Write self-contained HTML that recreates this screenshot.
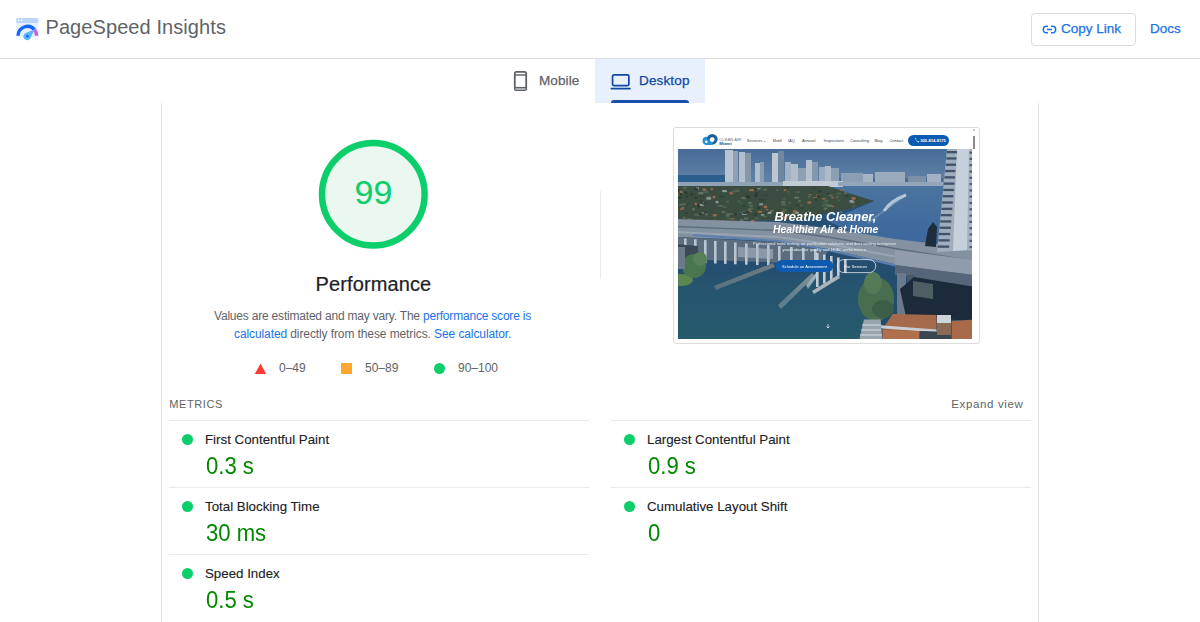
<!DOCTYPE html>
<html><head><meta charset="utf-8">
<style>
*{margin:0;padding:0;box-sizing:border-box}
html,body{width:1200px;height:622px;overflow:hidden;background:#fff;font-family:"Liberation Sans",sans-serif}
.a{position:absolute;white-space:nowrap}
.hdr{position:absolute;left:0;top:0;width:1200px;height:59px;border-bottom:1px solid #dadce0;background:#fff}
.title{left:45.5px;top:17.3px;font-size:20px;line-height:20px;letter-spacing:0.08px;color:#5f6368}
.btn{left:1031px;top:13px;width:105px;height:33px;border:1px solid #dadce0;border-radius:4px;background:#fff}
.blue{color:#1a73e8}
.med{-webkit-text-stroke:0.25px currentColor}
.tabbg{left:595px;top:59px;width:110px;height:44px;background:#e8f0fe}
.uline{left:611px;top:100px;width:78px;height:3px;background:#1a4fae;border-radius:3px 3px 0 0}
.panel{left:161px;top:103px;width:878px;height:600px;border-left:1px solid #e5e7ea;border-right:1px solid #e5e7ea}
.vdiv{left:600px;top:191px;width:1px;height:88px;background:#e8eaed}
.desc{font-size:12px;line-height:12px;color:#5f6368}
.leg{font-size:12px;line-height:12px;color:#5f6368}
.mt{font-size:13.3px;line-height:14px;color:#202124;-webkit-text-stroke:0.12px #202124;margin-top:0.5px}
.mv{font-size:23.5px;line-height:23.5px;color:#008800;transform:scaleX(0.94);transform-origin:0 0;margin-left:0.6px}
.hr{height:1px;background:#e8eaed}
.dot{width:11px;height:11px;border-radius:50%;background:#0cce6b}
</style></head><body>
<div class="hdr"></div>
<!-- logo -->
<svg class="a" style="left:15px;top:17px" width="25" height="25" viewBox="15 17 25 25">
  <rect x="16.3" y="18.1" width="22" height="19.5" rx="1.2" fill="#e8f0fe"/>
  <rect x="16.3" y="18.1" width="22" height="5" rx="1.2" fill="#bcd6fb"/>
  <circle cx="18.7" cy="20.4" r="0.8" fill="#fff"/>
  <circle cx="21.6" cy="20.4" r="0.8" fill="#fff"/>
  <path d="M18.05 35.8 A9.35 9.35 0 0 1 34.56 29.79" fill="none" stroke="#1464ff" stroke-width="3.4"/>
  <path d="M34.56 29.79 A9.35 9.35 0 0 1 36.75 35.8" fill="none" stroke="#c65cf2" stroke-width="3.4"/>
  <path d="M24.2 38.8 A3.7 3.7 0 0 1 25.3 33.2 L34.6 29.3 L30.3 38.5 A3.7 3.7 0 0 1 24.2 38.8Z" fill="#5cb6ff"/>
  <circle cx="27.4" cy="36.2" r="1.35" fill="#1464ff"/>
</svg>
<div class="a title">PageSpeed Insights</div>
<div class="a btn"></div>
<svg class="a" style="left:1042px;top:25px" width="15" height="9" viewBox="0 0 15 9">
  <path d="M6 1.2 H4.6 A3.3 3.3 0 0 0 4.6 7.8 H6 M9 1.2 H10.4 A3.3 3.3 0 0 1 10.4 7.8 H9 M4.9 4.5 H10.1" fill="none" stroke="#1a73e8" stroke-width="1.5"/>
</svg>
<div class="a blue med" style="left:1061px;top:22px;font-size:13.5px;line-height:14px">Copy Link</div>
<div class="a blue med" style="left:1150px;top:22px;font-size:13.5px;line-height:14px">Docs</div>

<!-- tabs -->
<div class="a tabbg"></div>
<div class="a uline"></div>
<svg class="a" style="left:513px;top:70px" width="15" height="22" viewBox="0 0 15 22">
  <rect x="1.8" y="1.8" width="11.4" height="18.4" rx="1.6" fill="none" stroke="#5f6368" stroke-width="1.8"/>
  <rect x="2.5" y="18" width="10" height="1.6" fill="#c9cacc"/>
  <rect x="1.8" y="16.9" width="11.4" height="1.4" fill="#5f6368"/>
  <rect x="1.8" y="4.3" width="11.4" height="1.4" fill="#5f6368"/>
</svg>
<div class="a med" style="left:539px;top:74.2px;font-size:13.5px;line-height:14px;letter-spacing:0.12px;color:#5f6368">Mobile</div>
<svg class="a" style="left:609px;top:73px" width="23" height="18" viewBox="0 0 23 18">
  <rect x="3.55" y="1.95" width="16.3" height="10.6" rx="1.3" fill="none" stroke="#0f47a3" stroke-width="1.7"/>
  <rect x="1.5" y="14.8" width="20.3" height="1.6" rx="0.8" fill="#0f47a3"/>
</svg>
<div class="a med" style="left:639px;top:74.2px;font-size:13.5px;line-height:14px;letter-spacing:0.15px;color:#0f47a3">Desktop</div>

<!-- panel -->
<div class="a panel"></div>

<!-- gauge -->
<svg class="a" style="left:318px;top:139px" width="111" height="111" viewBox="0 0 111 111">
  <circle cx="55.3" cy="55.3" r="51.3" fill="#eaf8ef" stroke="#0cce6b" stroke-width="6.5"/>
</svg>
<div class="a" style="left:323.5px;width:100px;text-align:center;top:174.5px;font-size:34px;line-height:34px;color:#0cce6b">99</div>
<div class="a" style="left:315.6px;top:274px;font-size:20px;line-height:20px;letter-spacing:0.11px;color:#202124;-webkit-text-stroke:0.2px #202124">Performance</div>
<div class="a desc" style="left:214px;top:310.2px;letter-spacing:-0.2px">Values are estimated and may vary. The <span class="blue">performance score is</span></div>
<div class="a desc" style="left:234px;top:328px;letter-spacing:-0.1px"><span class="blue">calculated</span> directly from these metrics. <span class="blue">See calculator.</span></div>

<svg class="a" style="left:254px;top:363px" width="13" height="12" viewBox="0 0 13 12"><path d="M6.5 0.5 L12.2 11 H0.8Z" fill="#ff3b36"/></svg>
<div class="a leg" style="left:279px;top:362px">0–49</div>
<div class="a" style="left:341px;top:363.3px;width:11px;height:10.5px;background:#ffa630"></div>
<div class="a leg" style="left:365px;top:362px">50–89</div>
<div class="a dot" style="left:434px;top:362.8px"></div>
<div class="a leg" style="left:458px;top:362px">90–100</div>

<div class="a vdiv"></div>

<!-- screenshot -->
<div class="a" style="left:673px;top:127px;width:307px;height:217px;border:1px solid #dcdcdc;border-radius:3px;background:#fff"></div>
<svg class="a" style="left:674px;top:128px" width="305" height="21" viewBox="674 128 305 21">
  <circle cx="706.5" cy="140.8" r="4" fill="#2a8fd0"/>
  <circle cx="712.2" cy="139.3" r="5.4" fill="#1f5f9a"/>
  <rect x="704" y="139.5" width="9" height="5.4" rx="2.7" fill="#2a8fd0"/>
  <circle cx="712.2" cy="139.6" r="2.4" fill="#fff"/>
  <circle cx="706.3" cy="141.8" r="1.2" fill="#fff"/>
  <text x="719.3" y="140.6" font-family="Liberation Sans" font-size="4.2" fill="#5d7a95">CLEAN AIR</text>
  <text x="719.3" y="145.2" font-family="Liberation Sans" font-weight="bold" font-size="4.4" fill="#1f4f80">Miami</text>
  <g font-family="Liberation Sans" font-size="4" fill="#3c4650">
    <text x="746.8" y="142">Services ⌄</text>
    <text x="772.8" y="142">Mold</text>
    <text x="788" y="142">IAQ</text>
    <text x="801.9" y="142">Aerosol</text>
    <text x="823.7" y="142">Inspections</text>
    <text x="850" y="142">Consulting</text>
    <text x="874.4" y="142">Blog</text>
    <text x="889.4" y="142">Contact</text>
  </g>
  <rect x="908" y="134.9" width="41" height="11.2" rx="5.6" fill="#0b5cb0"/>
  <path d="M915.2 138.3 q0.3 2.8 3.2 4.3 l0.9 -0.9 -1.1 -0.8 -0.7 0.6 q-1.2 -0.7 -1.7 -1.9 l0.6 -0.6 -0.8 -1.2z" fill="#fff"/>
  <text x="920.3" y="142.1" font-family="Liberation Sans" font-weight="bold" font-size="4.1" fill="#fff">305-814-8175</text>
  <rect x="973" y="129.5" width="2" height="1" fill="#9a9a9a"/>
  <rect x="973" y="136" width="2" height="23" fill="#8a8a8a"/>
</svg>
<svg class="a" style="left:678px;top:149px" width="294" height="190" viewBox="0 0 294 190">
<defs>
<linearGradient id="sky" x1="0" y1="0" x2="0" y2="1"><stop offset="0" stop-color="#456a95"/><stop offset="1" stop-color="#6384a9"/></linearGradient>
<linearGradient id="wat" x1="0" y1="0" x2="0" y2="1"><stop offset="0" stop-color="#2b5a86"/><stop offset="0.45" stop-color="#264f74"/><stop offset="1" stop-color="#214d64"/></linearGradient>
<linearGradient id="bay" x1="0" y1="0" x2="0" y2="1"><stop offset="0" stop-color="#4b74a0"/><stop offset="1" stop-color="#37649a"/></linearGradient>
<linearGradient id="lw" x1="0" y1="0" x2="0" y2="1"><stop offset="0" stop-color="#2a6074" stop-opacity="0"/><stop offset="0.4" stop-color="#2a6074" stop-opacity="0.45"/><stop offset="1" stop-color="#2d6570" stop-opacity="0.6"/></linearGradient>
<filter id="bl" x="-5%" y="-5%" width="110%" height="110%"><feGaussianBlur stdDeviation="0.7"/></filter>
<filter id="bl2"><feGaussianBlur stdDeviation="0.25"/></filter>
<clipPath id="cp"><rect width="294" height="190"/></clipPath>
</defs>
<g clip-path="url(#cp)"><g filter="url(#bl)">
<rect x="-3" y="-3" width="300" height="196" fill="url(#wat)"/>
<rect x="-3" y="-3" width="300" height="39" fill="url(#sky)"/>
<rect x="-3" y="26" width="60" height="11" fill="#2a5f8e"/>
<rect x="150" y="29" width="115" height="7" fill="#4a6d94"/>
<polygon points="130,36 268,35 268,112 200,96 150,72 196,52 170,44" fill="url(#bay)"/>
<path d="M190 74 Q205 62 228 46" stroke="#7d9cc0" stroke-width="2" fill="none" opacity="0.6"/>
<path d="M206 62 Q212 52 228 46" stroke="#c3d2e2" stroke-width="3" fill="none" opacity="0.85"/>
<rect x="47" y="1" width="8" height="35" fill="#b7c3d0"/>
<rect x="55" y="2" width="5" height="34" fill="#8fa0b3"/>
<rect x="61" y="3" width="6" height="33" fill="#b3bfcd"/>
<rect x="67" y="4" width="6" height="32" fill="#8597ab"/>
<rect x="77" y="14" width="5" height="22" fill="#b2becc"/>
<rect x="82" y="13" width="4" height="23" fill="#8a9cb0"/>
<rect x="94" y="4" width="6" height="32" fill="#bcc7d3"/>
<rect x="100" y="2" width="6" height="34" fill="#71869f"/>
<rect x="107" y="13" width="6" height="23" fill="#a3b2c4"/>
<rect x="113" y="15" width="7" height="21" fill="#b0bdcb"/>
<rect x="120" y="19" width="8" height="17" fill="#8ea0b4"/>
<rect x="128" y="11" width="6" height="25" fill="#b5c1ce"/>
<rect x="134" y="13" width="6" height="23" fill="#8497ad"/>
<rect x="141" y="18" width="6" height="18" fill="#9cacbf"/>
<rect x="147" y="17" width="6" height="19" fill="#aebbca"/>
<rect x="153" y="19" width="8" height="17" fill="#8c9eb2"/>
<rect x="163" y="24" width="22" height="12" fill="#8c9eb3"/>
<rect x="185" y="25" width="10" height="11" fill="#a5b4c5"/>
<rect x="197" y="23" width="30" height="13" fill="#9aabbe"/>
<rect x="230" y="27" width="18" height="9" fill="#7d90a6"/>
<rect x="249" y="25" width="14" height="11" fill="#a2b2c4"/>
<rect x="-3" y="33" width="115" height="4" fill="#8fa3b6"/>
<rect x="105" y="32" width="60" height="6" fill="#c2ccd6"/>
<rect x="160" y="33" width="105" height="4" fill="#93a5b8"/>
<polygon points="-3,37 150,37 170,44 196,52 172,60 148,64 120,71 -3,73" fill="#3a4e40"/>
<rect x="85.8" y="56.6" width="3.4" height="2.4" fill="#98694e"/>
<rect x="34.8" y="65.1" width="3.9" height="2.3" fill="#98694e"/>
<rect x="16.3" y="47.6" width="3.6" height="2.4" fill="#2e4034"/>
<rect x="121.1" y="57.8" width="4.9" height="2.1" fill="#34473a"/>
<rect x="117.4" y="42.5" width="4.5" height="1.3" fill="#566a58"/>
<rect x="4.9" y="67.8" width="2.1" height="1.8" fill="#5c6f5a"/>
<rect x="83.5" y="66.5" width="2.7" height="1.6" fill="#46604c"/>
<rect x="-1.1" y="40.0" width="2.8" height="2.6" fill="#2a3a30"/>
<rect x="135.3" y="48.0" width="3.5" height="1.2" fill="#8a644e"/>
<rect x="107.2" y="40.8" width="4.5" height="1.7" fill="#2e4034"/>
<rect x="-1.9" y="44.3" width="3.4" height="2.6" fill="#566a58"/>
<rect x="75.1" y="39.6" width="2.6" height="2.1" fill="#2a3a30"/>
<rect x="63.4" y="47.9" width="4.9" height="2.3" fill="#566a58"/>
<rect x="20.9" y="45.6" width="2.0" height="1.9" fill="#2e4034"/>
<rect x="92.4" y="60.9" width="3.3" height="1.5" fill="#8a644e"/>
<rect x="140.0" y="41.6" width="3.2" height="1.8" fill="#2a3a30"/>
<rect x="1.8" y="43.6" width="3.9" height="1.3" fill="#5c6f5a"/>
<rect x="48.1" y="64.0" width="4.5" height="1.7" fill="#4f6352"/>
<rect x="12.4" y="44.3" width="2.7" height="2.0" fill="#2a3a30"/>
<rect x="70.1" y="52.9" width="3.5" height="2.0" fill="#5c6f5a"/>
<rect x="166.1" y="43.4" width="2.9" height="1.5" fill="#62725f"/>
<rect x="116.4" y="62.4" width="4.2" height="2.5" fill="#62725f"/>
<rect x="36.1" y="70.3" width="3.8" height="1.8" fill="#98694e"/>
<rect x="18.1" y="38.4" width="2.7" height="2.2" fill="#8d9a9c"/>
<rect x="47.9" y="65.8" width="3.5" height="1.9" fill="#5c6f5a"/>
<rect x="22.5" y="53.8" width="4.6" height="2.1" fill="#2a3a30"/>
<rect x="52.4" y="69.1" width="4.2" height="1.3" fill="#8a644e"/>
<rect x="77.8" y="45.7" width="2.5" height="1.7" fill="#566a58"/>
<rect x="109.0" y="41.6" width="2.4" height="1.8" fill="#4f6352"/>
<rect x="62.2" y="62.7" width="3.8" height="1.4" fill="#46604c"/>
<rect x="4.8" y="37.6" width="4.1" height="2.5" fill="#4f6352"/>
<rect x="2.1" y="59.3" width="2.2" height="1.6" fill="#98694e"/>
<rect x="24.5" y="39.5" width="3.6" height="2.2" fill="#98694e"/>
<rect x="175.5" y="49.3" width="3.4" height="1.3" fill="#2a3a30"/>
<rect x="3.9" y="54.5" width="3.9" height="1.7" fill="#566a58"/>
<rect x="111.0" y="58.3" width="2.3" height="1.4" fill="#2e4034"/>
<rect x="47.9" y="51.6" width="3.2" height="2.2" fill="#4f6352"/>
<rect x="110.7" y="52.4" width="2.3" height="2.3" fill="#46604c"/>
<rect x="3.8" y="58.0" width="2.1" height="2.5" fill="#98694e"/>
<rect x="19.9" y="64.3" width="4.8" height="1.6" fill="#2a3a30"/>
<rect x="0.2" y="47.5" width="3.8" height="1.9" fill="#2a3a30"/>
<rect x="144.2" y="49.0" width="3.5" height="1.5" fill="#98694e"/>
<rect x="76.5" y="45.8" width="3.3" height="2.3" fill="#2a3a30"/>
<rect x="72.6" y="57.4" width="2.6" height="1.4" fill="#4f6352"/>
<rect x="66.0" y="68.3" width="4.1" height="2.5" fill="#566a58"/>
<rect x="51.7" y="42.9" width="3.4" height="2.5" fill="#98694e"/>
<rect x="159.2" y="50.4" width="3.5" height="1.6" fill="#46604c"/>
<rect x="85.8" y="39.6" width="2.8" height="2.1" fill="#566a58"/>
<rect x="129.6" y="46.8" width="2.9" height="2.3" fill="#4f6352"/>
<rect x="1.7" y="41.8" width="2.6" height="2.3" fill="#98694e"/>
<rect x="49.7" y="64.3" width="5.0" height="1.4" fill="#566a58"/>
<rect x="19.1" y="55.7" width="4.4" height="2.5" fill="#2a3a30"/>
<rect x="130.8" y="44.0" width="2.8" height="2.2" fill="#98694e"/>
<rect x="144.5" y="55.7" width="2.5" height="1.6" fill="#566a58"/>
<rect x="65.1" y="61.4" width="3.5" height="2.6" fill="#46604c"/>
<rect x="28.9" y="66.7" width="4.7" height="1.3" fill="#40553f"/>
<rect x="23.2" y="52.9" width="4.7" height="1.2" fill="#2a3a30"/>
<rect x="104.7" y="59.8" width="4.4" height="2.5" fill="#46604c"/>
<rect x="88.0" y="59.8" width="2.3" height="2.4" fill="#8a644e"/>
<rect x="22.0" y="45.5" width="4.9" height="2.6" fill="#34473a"/>
<rect x="102.2" y="64.7" width="2.8" height="2.2" fill="#4f6352"/>
<rect x="1.0" y="54.7" width="3.3" height="2.0" fill="#566a58"/>
<rect x="147.0" y="54.1" width="2.7" height="2.4" fill="#566a58"/>
<rect x="81.2" y="38.2" width="3.0" height="2.3" fill="#46604c"/>
<rect x="25.3" y="42.2" width="4.7" height="1.9" fill="#46604c"/>
<rect x="129.5" y="52.4" width="3.7" height="2.2" fill="#98694e"/>
<rect x="145.0" y="52.4" width="2.9" height="2.2" fill="#46604c"/>
<rect x="121.9" y="55.3" width="2.8" height="2.1" fill="#46604c"/>
<rect x="116.2" y="47.7" width="4.9" height="1.9" fill="#62725f"/>
<rect x="109.2" y="44.0" width="2.3" height="1.2" fill="#46604c"/>
<rect x="71.1" y="55.8" width="3.5" height="1.8" fill="#566a58"/>
<rect x="153.4" y="56.7" width="2.3" height="1.4" fill="#98694e"/>
<rect x="178.6" y="53.1" width="2.8" height="1.9" fill="#34473a"/>
<rect x="22.6" y="52.2" width="3.6" height="1.4" fill="#98694e"/>
<rect x="79.4" y="38.0" width="2.4" height="2.3" fill="#8d9a9c"/>
<rect x="2.4" y="43.8" width="2.0" height="1.6" fill="#8a644e"/>
<rect x="138.4" y="45.6" width="2.3" height="2.2" fill="#98694e"/>
<rect x="21.8" y="54.9" width="4.2" height="2.2" fill="#8d9a9c"/>
<rect x="117.5" y="55.8" width="3.6" height="1.5" fill="#2a3a30"/>
<rect x="39.9" y="56.0" width="4.6" height="1.5" fill="#5c6f5a"/>
<rect x="173.1" y="48.1" width="4.7" height="1.5" fill="#4f6352"/>
<rect x="149.0" y="43.8" width="2.4" height="1.5" fill="#2e4034"/>
<rect x="139.0" y="46.1" width="3.3" height="2.5" fill="#2e4034"/>
<rect x="103.4" y="61.7" width="3.2" height="2.2" fill="#8a644e"/>
<rect x="1.4" y="44.0" width="3.1" height="2.3" fill="#2a3a30"/>
<rect x="68.1" y="61.7" width="4.3" height="1.9" fill="#2a3a30"/>
<rect x="131.0" y="43.6" width="3.4" height="1.2" fill="#2e4034"/>
<rect x="145.8" y="58.5" width="3.4" height="1.5" fill="#5c6f5a"/>
<rect x="20.3" y="43.0" width="5.0" height="2.5" fill="#62725f"/>
<rect x="16.5" y="39.2" width="3.4" height="2.3" fill="#2a3a30"/>
<rect x="61.4" y="53.3" width="3.1" height="1.5" fill="#46604c"/>
<rect x="70.4" y="59.2" width="4.5" height="1.5" fill="#566a58"/>
<rect x="86.1" y="62.9" width="4.8" height="2.0" fill="#34473a"/>
<rect x="16.4" y="64.7" width="4.7" height="2.3" fill="#4f6352"/>
<rect x="120.1" y="51.2" width="2.6" height="2.0" fill="#5c6f5a"/>
<rect x="64.1" y="63.7" width="4.7" height="2.2" fill="#8d9a9c"/>
<rect x="76.7" y="68.4" width="4.1" height="2.3" fill="#46604c"/>
<rect x="146.5" y="51.2" width="2.6" height="2.3" fill="#40553f"/>
<rect x="56.5" y="40.5" width="5.0" height="2.5" fill="#4f6352"/>
<rect x="7.6" y="46.6" width="2.9" height="1.5" fill="#2a3a30"/>
<rect x="76.8" y="43.4" width="3.2" height="2.6" fill="#2e4034"/>
<rect x="122.6" y="61.5" width="4.9" height="1.2" fill="#34473a"/>
<rect x="117.4" y="62.9" width="3.3" height="1.9" fill="#8d9a9c"/>
<rect x="145.7" y="59.7" width="2.3" height="1.6" fill="#566a58"/>
<rect x="173.7" y="56.3" width="3.2" height="1.9" fill="#46604c"/>
<rect x="162.2" y="40.5" width="4.4" height="1.3" fill="#98694e"/>
<rect x="113.9" y="63.6" width="3.2" height="2.5" fill="#566a58"/>
<rect x="72.9" y="71.0" width="3.6" height="2.0" fill="#98694e"/>
<rect x="81.3" y="54.3" width="3.6" height="2.0" fill="#8d9a9c"/>
<rect x="68.9" y="47.0" width="2.8" height="2.5" fill="#2a3a30"/>
<rect x="126.7" y="63.2" width="2.0" height="1.5" fill="#566a58"/>
<rect x="6.3" y="42.5" width="3.2" height="2.5" fill="#2a3a30"/>
<rect x="143.2" y="38.8" width="4.8" height="1.3" fill="#40553f"/>
<rect x="173.7" y="52.0" width="2.8" height="2.3" fill="#98694e"/>
<rect x="6.8" y="40.4" width="4.7" height="1.4" fill="#40553f"/>
<rect x="135.0" y="38.8" width="3.4" height="1.5" fill="#34473a"/>
<rect x="8.1" y="55.5" width="3.1" height="1.4" fill="#2e4034"/>
<rect x="78.9" y="58.0" width="3.7" height="1.8" fill="#2a3a30"/>
<rect x="148.9" y="55.6" width="4.9" height="2.2" fill="#62725f"/>
<rect x="44.3" y="41.0" width="4.4" height="2.1" fill="#8d9a9c"/>
<rect x="67.7" y="46.5" width="4.2" height="2.2" fill="#2a3a30"/>
<rect x="34.9" y="46.8" width="2.6" height="1.5" fill="#8a644e"/>
<rect x="9.8" y="46.5" width="2.1" height="1.3" fill="#34473a"/>
<rect x="41.2" y="46.7" width="4.7" height="1.4" fill="#2e4034"/>
<rect x="43.5" y="71.4" width="3.4" height="1.5" fill="#98694e"/>
<rect x="64.7" y="63.1" width="4.4" height="1.8" fill="#2e4034"/>
<rect x="147.2" y="52.6" width="2.8" height="2.3" fill="#40553f"/>
<rect x="69.6" y="59.9" width="3.0" height="2.0" fill="#5c6f5a"/>
<rect x="81.0" y="49.9" width="3.4" height="1.7" fill="#2e4034"/>
<rect x="103.5" y="52.1" width="3.5" height="2.2" fill="#5c6f5a"/>
<rect x="56.0" y="64.1" width="2.9" height="2.5" fill="#2e4034"/>
<rect x="115.1" y="61.3" width="4.2" height="2.2" fill="#98694e"/>
<rect x="52.9" y="42.0" width="4.0" height="1.7" fill="#4f6352"/>
<rect x="173.8" y="48.3" width="3.7" height="2.5" fill="#98694e"/>
<rect x="83.0" y="65.1" width="3.4" height="1.5" fill="#8d9a9c"/>
<rect x="98.1" y="40.0" width="2.1" height="2.1" fill="#4f6352"/>
<rect x="111.5" y="64.9" width="3.7" height="2.3" fill="#40553f"/>
<rect x="102.9" y="66.3" width="2.5" height="1.3" fill="#5c6f5a"/>
<rect x="86.1" y="66.9" width="2.7" height="1.3" fill="#566a58"/>
<rect x="28.8" y="47.4" width="4.0" height="2.3" fill="#566a58"/>
<rect x="10.4" y="56.1" width="2.3" height="1.3" fill="#46604c"/>
<rect x="14.4" y="59.2" width="2.3" height="2.3" fill="#62725f"/>
<rect x="79.9" y="61.9" width="4.3" height="1.9" fill="#98694e"/>
<rect x="146.4" y="50.8" width="4.4" height="1.7" fill="#4f6352"/>
<rect x="24.5" y="54.1" width="2.2" height="2.1" fill="#40553f"/>
<rect x="7.0" y="63.5" width="3.0" height="1.2" fill="#2a3a30"/>
<rect x="71.3" y="40.1" width="4.9" height="2.1" fill="#98694e"/>
<rect x="99.6" y="61.9" width="3.3" height="1.8" fill="#2e4034"/>
<rect x="26.4" y="62.9" width="3.1" height="1.4" fill="#2a3a30"/>
<rect x="37.6" y="51.9" width="2.8" height="2.4" fill="#8d9a9c"/>
<rect x="89.5" y="62.6" width="3.9" height="2.3" fill="#8d9a9c"/>
<rect x="32.8" y="39.2" width="2.1" height="1.9" fill="#98694e"/>
<rect x="153.3" y="47.9" width="2.6" height="1.5" fill="#8a644e"/>
<rect x="43.7" y="62.1" width="3.5" height="1.8" fill="#5c6f5a"/>
<rect x="171.5" y="51.1" width="3.9" height="2.5" fill="#8d9a9c"/>
<rect x="104.8" y="66.9" width="4.7" height="2.5" fill="#98694e"/>
<rect x="64.4" y="56.2" width="3.4" height="1.5" fill="#2e4034"/>
<rect x="7.6" y="70.2" width="4.9" height="2.3" fill="#34473a"/>
<rect x="9.2" y="69.3" width="4.6" height="2.5" fill="#566a58"/>
<rect x="85.3" y="45.6" width="3.8" height="1.4" fill="#34473a"/>
<rect x="28.4" y="48.3" width="4.7" height="2.3" fill="#8d9a9c"/>
<rect x="23.4" y="63.0" width="2.8" height="1.9" fill="#5c6f5a"/>
<rect x="27.2" y="64.0" width="2.6" height="2.5" fill="#566a58"/>
<rect x="26.9" y="41.5" width="2.8" height="2.2" fill="#4f6352"/>
<rect x="16.9" y="53.8" width="2.2" height="2.2" fill="#98694e"/>
<rect x="103.4" y="54.7" width="4.4" height="1.8" fill="#566a58"/>
<rect x="158.3" y="44.3" width="3.2" height="1.9" fill="#46604c"/>
<rect x="59.3" y="51.2" width="2.9" height="1.9" fill="#46604c"/>
<rect x="136.7" y="49.6" width="2.4" height="2.1" fill="#2a3a30"/>
<rect x="129.1" y="63.1" width="4.0" height="1.2" fill="#2e4034"/>
<rect x="71.2" y="61.9" width="2.9" height="1.4" fill="#8a644e"/>
<rect x="161.8" y="62.2" width="2.5" height="2.1" fill="#5c6f5a"/>
<rect x="105.8" y="40.0" width="2.6" height="2.2" fill="#8a644e"/>
<rect x="61.9" y="70.1" width="3.4" height="2.1" fill="#5c6f5a"/>
<rect x="84.7" y="50.4" width="2.4" height="1.3" fill="#2e4034"/>
<rect x="129.5" y="61.8" width="2.6" height="1.3" fill="#62725f"/>
<rect x="87.9" y="61.6" width="2.7" height="1.4" fill="#2e4034"/>
<rect x="22.1" y="51.2" width="3.0" height="2.4" fill="#2e4034"/>
<rect x="37.9" y="42.2" width="3.2" height="1.7" fill="#40553f"/>
<rect x="78.0" y="37.5" width="3.8" height="1.6" fill="#34473a"/>
<rect x="151.0" y="45.6" width="3.6" height="1.6" fill="#5c6f5a"/>
<rect x="34.6" y="47.7" width="2.3" height="1.7" fill="#98694e"/>
<rect x="96.8" y="64.6" width="3.8" height="1.4" fill="#2e4034"/>
<rect x="104.4" y="49.3" width="3.5" height="2.0" fill="#46604c"/>
<rect x="36.4" y="69.7" width="4.1" height="2.5" fill="#40553f"/>
<rect x="108.1" y="37.9" width="2.6" height="1.3" fill="#2a3a30"/>
<rect x="45.5" y="57.2" width="3.0" height="1.3" fill="#40553f"/>
<rect x="167.3" y="46.3" width="3.4" height="2.2" fill="#2e4034"/>
<rect x="44.3" y="56.9" width="3.7" height="2.0" fill="#46604c"/>
<rect x="49.3" y="68.8" width="3.8" height="1.4" fill="#4f6352"/>
<rect x="158.0" y="47.1" width="2.7" height="2.0" fill="#4f6352"/>
<rect x="159.2" y="43.5" width="4.4" height="1.8" fill="#46604c"/>
<rect x="76.3" y="64.4" width="2.4" height="2.3" fill="#2a3a30"/>
<polygon points="-3,70 100,73 150,79 217,90 294,99 297,99 297,130 220,116 150,100 100,92 -3,88" fill="#8391a1"/>
<path d="M-3 77.5 L100 81.5 L150 88 L220 100 L297 112" stroke="#5d6d7f" stroke-width="1.3" fill="none"/>
<path d="M-3 83 L100 88 L150 95 L220 108 L297 121" stroke="#97a4b2" stroke-width="2" fill="none"/>
<path d="M15 86 L100 92 L150 101 L220 117 L297 131" stroke="#5a7fb0" stroke-width="2" fill="none"/>
<polygon points="-3,88 100,93 150,102 140,118 90,113 -3,110" fill="#5b6d80"/>
<rect x="6" y="89.5" width="2.6" height="23.8" fill="#b9c5d1"/>
<rect x="16" y="90.3" width="2.6" height="23.4" fill="#b9c5d1"/>
<rect x="26" y="91.1" width="2.6" height="23.0" fill="#b9c5d1"/>
<rect x="36" y="91.9" width="2.6" height="22.6" fill="#b9c5d1"/>
<rect x="46" y="92.7" width="2.6" height="22.2" fill="#b9c5d1"/>
<rect x="56" y="93.5" width="2.6" height="21.8" fill="#b9c5d1"/>
<rect x="67" y="94.4" width="2.6" height="21.3" fill="#b9c5d1"/>
<rect x="78" y="95.2" width="2.6" height="20.9" fill="#b9c5d1"/>
<rect x="89" y="96.1" width="2.6" height="20.4" fill="#b9c5d1"/>
<rect x="100" y="97.0" width="2.6" height="20.0" fill="#b9c5d1"/>
<rect x="112" y="98.0" width="2.6" height="19.5" fill="#b9c5d1"/>
<rect x="124" y="98.9" width="2.6" height="19.0" fill="#b9c5d1"/>
<rect x="136" y="99.9" width="2.6" height="18.6" fill="#b9c5d1"/>
<polygon points="60,98 95,100 95,110 60,108" fill="#aab6c2" opacity="0.6"/>
<polygon points="-3,95 20,97 20,110 -3,110" fill="#3b4856"/>
<polygon points="217,101 297,111 297,126 217,116" fill="#909cab"/>
<polygon points="217,116 297,126 297,138 217,126" fill="#56657a"/>
<rect x="219" y="124" width="9" height="46" fill="#6a798b"/>
<rect x="229" y="126" width="7" height="40" fill="#4a5868"/>
<polygon points="36,137 95,114 97,118 38,141" fill="#6c7a82"/>
<polygon points="100,156 134,124 137,127 103,160" fill="#8e989e"/>
<polygon points="128,136 138,124 140,126 130,140" fill="#b7c0c8"/>
<rect x="-3" y="118" width="205" height="75" fill="url(#lw)"/>
<rect x="138" y="104.0" width="2.6" height="34" fill="#c3ccd6"/>
<rect x="145" y="105.5" width="2.6" height="29" fill="#c3ccd6"/>
<rect x="152" y="107.0" width="2.6" height="24" fill="#c3ccd6"/>
<rect x="159" y="108.5" width="2.6" height="19" fill="#c3ccd6"/>
<rect x="166" y="110.0" width="2.6" height="14" fill="#c3ccd6"/>
<polygon points="134,142 160,126 162,129 136,145" fill="#aab4be"/>
<ellipse cx="4" cy="131" rx="11" ry="6" fill="#5a8650"/>
<ellipse cx="16" cy="117" rx="12" ry="12" fill="#4a7450"/>
<ellipse cx="22" cy="110" rx="7" ry="7" fill="#5a805a"/>
<rect x="-3" y="98" width="10" height="22" fill="#6a7a88"/>
<polygon points="236,128 297,138 297,172 228,168 222,140" fill="#1d2b3b"/>
<polygon points="235,132 255,135 255,150 235,147" fill="#4d5e64"/>
<ellipse cx="198" cy="150" rx="18" ry="22" fill="#4a6e50"/>
<ellipse cx="195" cy="134" rx="9" ry="11" fill="#557a58"/>
<ellipse cx="205" cy="160" rx="11" ry="9" fill="#3d5f46"/>
<polygon points="214.6,165 258.5,166 258.5,183 204.4,180.5" fill="#a5694b"/>
<polygon points="202.7,176.3 258.5,180.5 258.5,183.5 202.7,179.3" fill="#c9cfd4"/>
<polygon points="204.4,180.5 241.6,182 241.6,193 204.4,193" fill="#b0704e"/>
<polygon points="241.6,182 275,183 275,193 241.6,193" fill="#3a4450"/>
<polygon points="273.7,172 297,170.4 297,193 273.7,193" fill="#a86a4a"/>
<rect x="259" y="166" width="14" height="8" fill="#cdd4da"/>
<rect x="259" y="174" width="14" height="12" fill="#8a6a55"/>
<polygon points="186,170.4 202.7,170.4 204.4,193 180.8,193" fill="#9aa5b0"/>
<path d="M184 176 L203 176 M183 181 L203 181 M182 186 L204 186" stroke="#dfe4e8" stroke-width="0.9"/>
<polygon points="269,0 297,0 297,101 259,103" fill="#9fadbd"/>
<polygon points="279,0 291,0 289,101 275,102" fill="#c6d0da"/>
<rect x="291" y="0" width="6" height="101" fill="#a9b6c4"/>
<rect x="269.0" y="2.0" width="10.0" height="2.3" fill="#3f5168"/>
<rect x="291.5" y="2.5" width="3.5" height="2.2" fill="#4a5b70"/>
<rect x="268.4" y="8.3" width="10.1" height="2.3" fill="#3f5168"/>
<rect x="291.5" y="8.8" width="3.5" height="2.2" fill="#4a5b70"/>
<rect x="267.8" y="14.6" width="10.2" height="2.3" fill="#3f5168"/>
<rect x="291.5" y="15.1" width="3.5" height="2.2" fill="#4a5b70"/>
<rect x="267.1" y="20.9" width="10.3" height="2.3" fill="#3f5168"/>
<rect x="291.5" y="21.4" width="3.5" height="2.2" fill="#4a5b70"/>
<rect x="266.5" y="27.2" width="10.4" height="2.3" fill="#3f5168"/>
<rect x="291.5" y="27.7" width="3.5" height="2.2" fill="#4a5b70"/>
<rect x="265.9" y="33.5" width="10.5" height="2.3" fill="#3f5168"/>
<rect x="291.5" y="34.0" width="3.5" height="2.2" fill="#4a5b70"/>
<rect x="265.3" y="39.8" width="10.6" height="2.3" fill="#3f5168"/>
<rect x="291.5" y="40.3" width="3.5" height="2.2" fill="#4a5b70"/>
<rect x="264.7" y="46.1" width="10.7" height="2.3" fill="#3f5168"/>
<rect x="291.5" y="46.6" width="3.5" height="2.2" fill="#4a5b70"/>
<rect x="264.0" y="52.4" width="10.8" height="2.3" fill="#3f5168"/>
<rect x="291.5" y="52.9" width="3.5" height="2.2" fill="#4a5b70"/>
<rect x="263.4" y="58.7" width="10.9" height="2.3" fill="#3f5168"/>
<rect x="291.5" y="59.2" width="3.5" height="2.2" fill="#4a5b70"/>
<rect x="262.8" y="65.0" width="11.0" height="2.3" fill="#3f5168"/>
<rect x="291.5" y="65.5" width="3.5" height="2.2" fill="#4a5b70"/>
<rect x="262.2" y="71.3" width="11.1" height="2.3" fill="#3f5168"/>
<rect x="291.5" y="71.8" width="3.5" height="2.2" fill="#4a5b70"/>
<rect x="261.6" y="77.6" width="11.2" height="2.3" fill="#3f5168"/>
<rect x="291.5" y="78.1" width="3.5" height="2.2" fill="#4a5b70"/>
<rect x="260.9" y="83.9" width="11.3" height="2.3" fill="#3f5168"/>
<rect x="291.5" y="84.4" width="3.5" height="2.2" fill="#4a5b70"/>
<rect x="260.3" y="90.2" width="11.4" height="2.3" fill="#3f5168"/>
<rect x="291.5" y="90.7" width="3.5" height="2.2" fill="#4a5b70"/>
<rect x="259.7" y="96.5" width="11.5" height="2.3" fill="#3f5168"/>
<rect x="291.5" y="97.0" width="3.5" height="2.2" fill="#4a5b70"/>
<polygon points="247,97 250,80 255,73 259,78 258,98" fill="#1c2d3b"/>
</g>
<g filter="url(#bl2)">
<text x="96.5" y="71.5" font-family="Liberation Sans" font-weight="bold" font-style="italic" font-size="12.9" fill="#fff">Breathe Cleaner,</text>
<text x="95" y="84.3" font-family="Liberation Sans" font-weight="bold" font-style="italic" font-size="10.4" fill="#fff">Healthier Air at Home</text>
<text x="75" y="95.5" font-family="Liberation Sans" font-size="4.1" fill="#e6ecf2">Professional mold testing, air purification solutions, and duct sealing to improve</text>
<text x="104.5" y="101.5" font-family="Liberation Sans" font-size="4.1" fill="#e6ecf2">your indoor air quality and HVAC performance.</text>
<rect x="97.7" y="111" width="57.6" height="12" rx="6" fill="#0f5aaf"/>
<text x="104" y="118.7" font-family="Liberation Sans" font-size="4" fill="#fff">Schedule an Assessment</text>
<rect x="159.3" y="110.6" width="38.5" height="13" rx="6.5" fill="none" stroke="#dfe6ee" stroke-width="0.8"/>
<text x="166" y="118.7" font-family="Liberation Sans" font-size="4" fill="#fff">Our Services</text>
<path d="M150 175 v4 M148.5 177.5 L150 179 L151.5 177.5" stroke="#dfe6ee" stroke-width="0.8" fill="none"/>
</g></g>
</svg>


<!-- metrics -->
<div class="a" style="left:169.3px;top:398.6px;font-size:11px;line-height:11px;letter-spacing:0.6px;color:#5f6368">METRICS</div>
<div class="a" style="left:951.3px;top:397.7px;font-size:11.5px;line-height:12px;letter-spacing:0.63px;color:#5f6368">Expand view</div>

<div class="a hr" style="left:169px;top:420px;width:420px"></div>
<div class="a hr" style="left:611px;top:420px;width:420px"></div>
<div class="a hr" style="left:169px;top:487px;width:420px"></div>
<div class="a hr" style="left:611px;top:487px;width:420px"></div>
<div class="a hr" style="left:169px;top:554px;width:420px"></div>

<div class="a dot" style="left:182px;top:434px"></div>
<div class="a mt" style="left:205px;top:432.5px">First Contentful Paint</div>
<div class="a mv" style="left:205px;top:455px">0.3 s</div>

<div class="a dot" style="left:182px;top:501px"></div>
<div class="a mt" style="left:205px;top:499.5px">Total Blocking Time</div>
<div class="a mv" style="left:205px;top:522px">30 ms</div>

<div class="a dot" style="left:182px;top:568px"></div>
<div class="a mt" style="left:205px;top:566.5px">Speed Index</div>
<div class="a mv" style="left:205px;top:589px">0.5 s</div>

<div class="a dot" style="left:624px;top:434px"></div>
<div class="a mt" style="left:647px;top:432.5px">Largest Contentful Paint</div>
<div class="a mv" style="left:647px;top:455px">0.9 s</div>

<div class="a dot" style="left:624px;top:501px"></div>
<div class="a mt" style="left:647px;top:499.5px">Cumulative Layout Shift</div>
<div class="a mv" style="left:647px;top:522px">0</div>
</body></html>
